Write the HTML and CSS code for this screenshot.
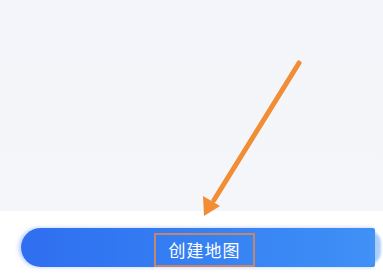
FILE: index.html
```html
<!DOCTYPE html>
<html lang="zh">
<head>
<meta charset="utf-8">
<link rel="stylesheet" href="styles.css">
</head>
<body>
<div class="page">
  <div class="canvas"></div>
  <div class="footer">
    <div class="btn">
      <span class="label">创建地图</span>
    </div>
  </div>
  <svg class="arrow" width="383" height="273" viewBox="0 0 383 273">
    <line x1="299" y1="63" x2="214" y2="200" stroke="#f08d35" stroke-width="5" stroke-linecap="round"/>
    <polygon points="204,216 203,196 220,206" fill="#f08d35"/>
  </svg>
</div>
</body>
</html>
```
FILE: styles.css
```css
html, body {
  margin: 0;
  padding: 0;
}
body {
  background: #ffffff;
  font-family: "Noto Sans CJK SC", "Noto Sans", sans-serif;
}
.page {
  position: relative;
  width: 383px;
  height: 273px;
  overflow: hidden;
}
.canvas {
  height: 211px;
  background: linear-gradient(180deg, #f3f5fa 0%, #f5f6f9 100%);
}
.footer {
  height: 62px;
  background: #ffffff;
  padding-top: 17px;
  padding-left: 21px;
  box-sizing: border-box;
}
.btn {
  position: relative;
  width: 354px;
  height: 39px;
  border-radius: 20px 2px 2px 20px;
  background: linear-gradient(90deg, #2f6ef0 0%, #3580f3 50%, #3f90f6 100%);
  box-shadow: -2px 0 4px rgba(47, 110, 240, 0.35);
  display: flex;
  align-items: center;
  padding-left: 133px;
  box-sizing: border-box;
}
.btn::after {
  content: "";
  position: absolute;
  right: -6px;
  top: 3px;
  width: 12px;
  height: 33px;
  border-radius: 0 16px 16px 0;
  background: rgba(70, 150, 245, 0.45);
  filter: blur(1px);
}
.label {
  display: flex;
  align-items: center;
  justify-content: center;
  width: 101px;
  height: 34px;
  box-sizing: border-box;
  border: 2px solid #c4866c;
  color: #ffffff;
  font-size: 17px;
  letter-spacing: 1px;
  margin-top: 4px;
}
.arrow {
  position: absolute;
  left: 0;
  top: 0;
  pointer-events: none;
}
```
